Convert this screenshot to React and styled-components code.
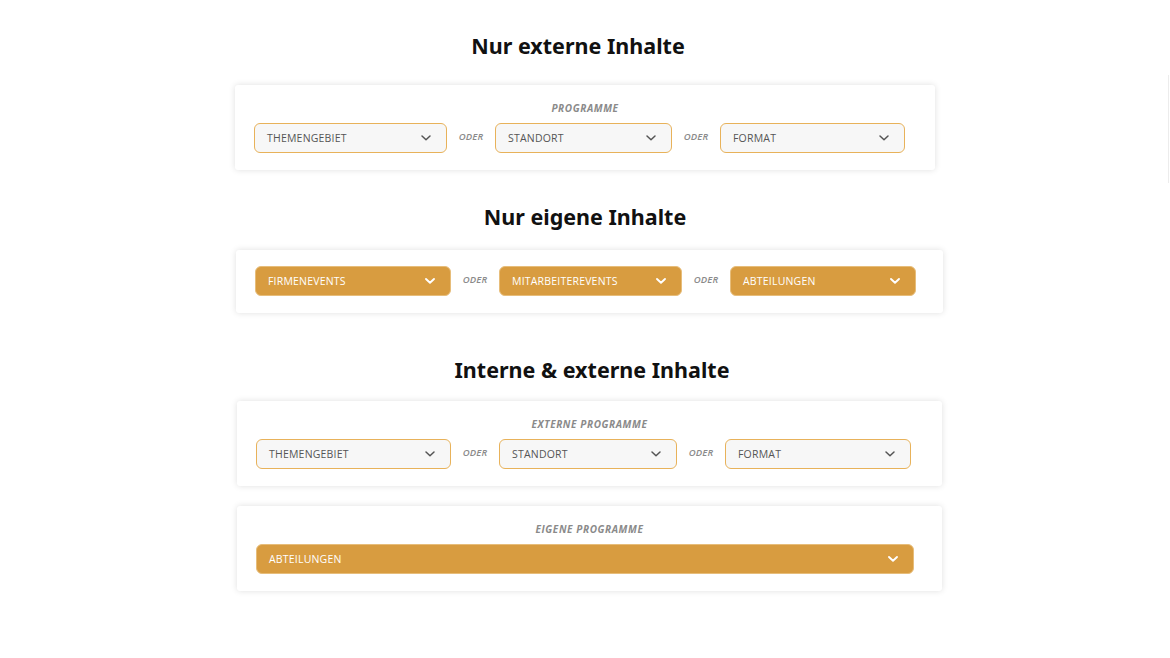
import React from "react";
import styled, { createGlobalStyle } from "styled-components";

const GlobalStyle = createGlobalStyle`
  html, body {
    margin: 0;
    padding: 0;
    background: #ffffff;
  }
  body {
    font-family: "Open Sans", "Liberation Sans", sans-serif;
  }
`;

const sections = [
  {
    title: "Nur externe Inhalte",
    titleShift: -7,
    top: 0,
    cardGap: 23,
    cards: [
      {
        label: "PROGRAMME",
        width: 700,
        shift: 0,
        filled: false,
        selects: [
          { text: "THEMENGEBIET", width: 193 },
          { text: "STANDORT", width: 177 },
          { text: "FORMAT", width: 185 },
        ],
      },
    ],
  },
  {
    title: "Nur eigene Inhalte",
    titleShift: 0,
    top: 31,
    cardGap: 17,
    cards: [
      {
        width: 707,
        shift: 9,
        filled: true,
        selects: [
          { text: "FIRMENEVENTS", width: 196 },
          { text: "MITARBEITEREVENTS", width: 183 },
          { text: "ABTEILUNGEN", width: 186 },
        ],
      },
    ],
  },
  {
    title: "Interne & externe Inhalte",
    titleShift: 7,
    top: 41,
    cardGap: 15,
    cards: [
      {
        label: "EXTERNE PROGRAMME",
        width: 705,
        shift: 9,
        filled: false,
        selects: [
          { text: "THEMENGEBIET", width: 195 },
          { text: "STANDORT", width: 178 },
          { text: "FORMAT", width: 186 },
        ],
      },
      {
        label: "EIGENE PROGRAMME",
        width: 705,
        shift: 9,
        filled: true,
        selects: [{ text: "ABTEILUNGEN", width: 658 }],
      },
    ],
  },
];

function Chevron({ filled }) {
  return (
    <ChevronIcon viewBox="0 0 12 8" $filled={filled}>
      <path d="M2 2 L6 5.8 L10 2" />
    </ChevronIcon>
  );
}

function Select({ text, width, filled }) {
  return (
    <SelectBox $width={width} $filled={filled}>
      <span>{text}</span>
      <Chevron filled={filled} />
    </SelectBox>
  );
}

function FilterCard({ label, width, shift, filled, selects }) {
  return (
    <Card $width={width} $shift={shift}>
      {label && <CardLabel>{label}</CardLabel>}
      <SelectRow>
        {selects.map((s, i) => (
          <React.Fragment key={s.text + i}>
            {i > 0 && <Oder>ODER</Oder>}
            <Select text={s.text} width={s.width} filled={filled} />
          </React.Fragment>
        ))}
      </SelectRow>
    </Card>
  );
}

export default function App() {
  return (
    <>
      <GlobalStyle />
      <Page>
        {sections.map((section) => (
          <Section key={section.title} $top={section.top}>
            <Heading $shift={section.titleShift}>{section.title}</Heading>
            <CardStack $gap={section.cardGap}>
              {section.cards.map((c, j) => (
                <FilterCard key={j} {...c} />
              ))}
            </CardStack>
          </Section>
        ))}
      </Page>
      <EdgeLine />
    </>
  );
}

const Page = styled.div`
  width: 1170px;
  height: 658px;
  display: flex;
  flex-direction: column;
  align-items: center;
  padding-top: 30px;
  box-sizing: border-box;
`;

const Section = styled.section`
  display: flex;
  flex-direction: column;
  align-items: center;
  margin-top: ${(p) => p.$top}px;
`;

const Heading = styled.h2`
  margin: 0;
  font-family: "Noto Sans", "Open Sans", sans-serif;
  font-weight: 700;
  font-size: 21.5px;
  line-height: 32px;
  color: #111111;
  transform: translateX(${(p) => p.$shift}px);
`;

const CardStack = styled.div`
  display: flex;
  flex-direction: column;
  gap: 20px;
  margin-top: ${(p) => p.$gap}px;
`;

const Card = styled.div`
  width: ${(p) => p.$width}px;
  margin-left: ${(p) => p.$shift}px;
  box-sizing: border-box;
  background: #ffffff;
  border-radius: 3px;
  box-shadow: 0 0 6px rgba(0, 0, 0, 0.13);
  padding: 16px 19px 17px 19px;
  display: flex;
  flex-direction: column;
  align-items: center;
`;

const CardLabel = styled.div`
  font-style: italic;
  font-weight: 700;
  font-size: 10px;
  letter-spacing: 0.6px;
  color: #8a8a8a;
  line-height: 14px;
  margin-bottom: 8px;
`;

const SelectRow = styled.div`
  display: flex;
  align-items: center;
  gap: 11px;
  width: 100%;
`;

const SelectBox = styled.div`
  width: ${(p) => p.$width}px;
  height: 30px;
  flex: none;
  box-sizing: border-box;
  border-radius: 6px;
  border: 1.5px solid ${(p) => (p.$filled ? "#e7bd7a" : "#e8b25a")};
  background: ${(p) => (p.$filled ? "#d89c40" : "#f7f7f7")};
  color: ${(p) => (p.$filled ? "#ffffff" : "#555555")};
  display: flex;
  align-items: center;
  justify-content: space-between;
  padding: 0 14px 0 12px;
  font-size: 10.5px;
  letter-spacing: 0.2px;
  span {
    white-space: nowrap;
  }
`;

const ChevronIcon = styled.svg`
  width: 12px;
  height: 8px;
  fill: none;
  stroke: ${(p) => (p.$filled ? "#ffffff" : "#555555")};
  stroke-width: ${(p) => (p.$filled ? 1.9 : 1.5)};
  stroke-linecap: round;
  stroke-linejoin: round;
`;

const Oder = styled.span`
  width: 26px;
  flex: none;
  text-align: center;
  font-style: italic;
  font-weight: 600;
  font-size: 9.5px;
  color: #8a8a8a;
  letter-spacing: 0.2px;
  margin-top: -3px;
`;

const EdgeLine = styled.div`
  position: absolute;
  top: 75px;
  left: 1168px;
  width: 1px;
  height: 108px;
  background: #ececec;
`;
